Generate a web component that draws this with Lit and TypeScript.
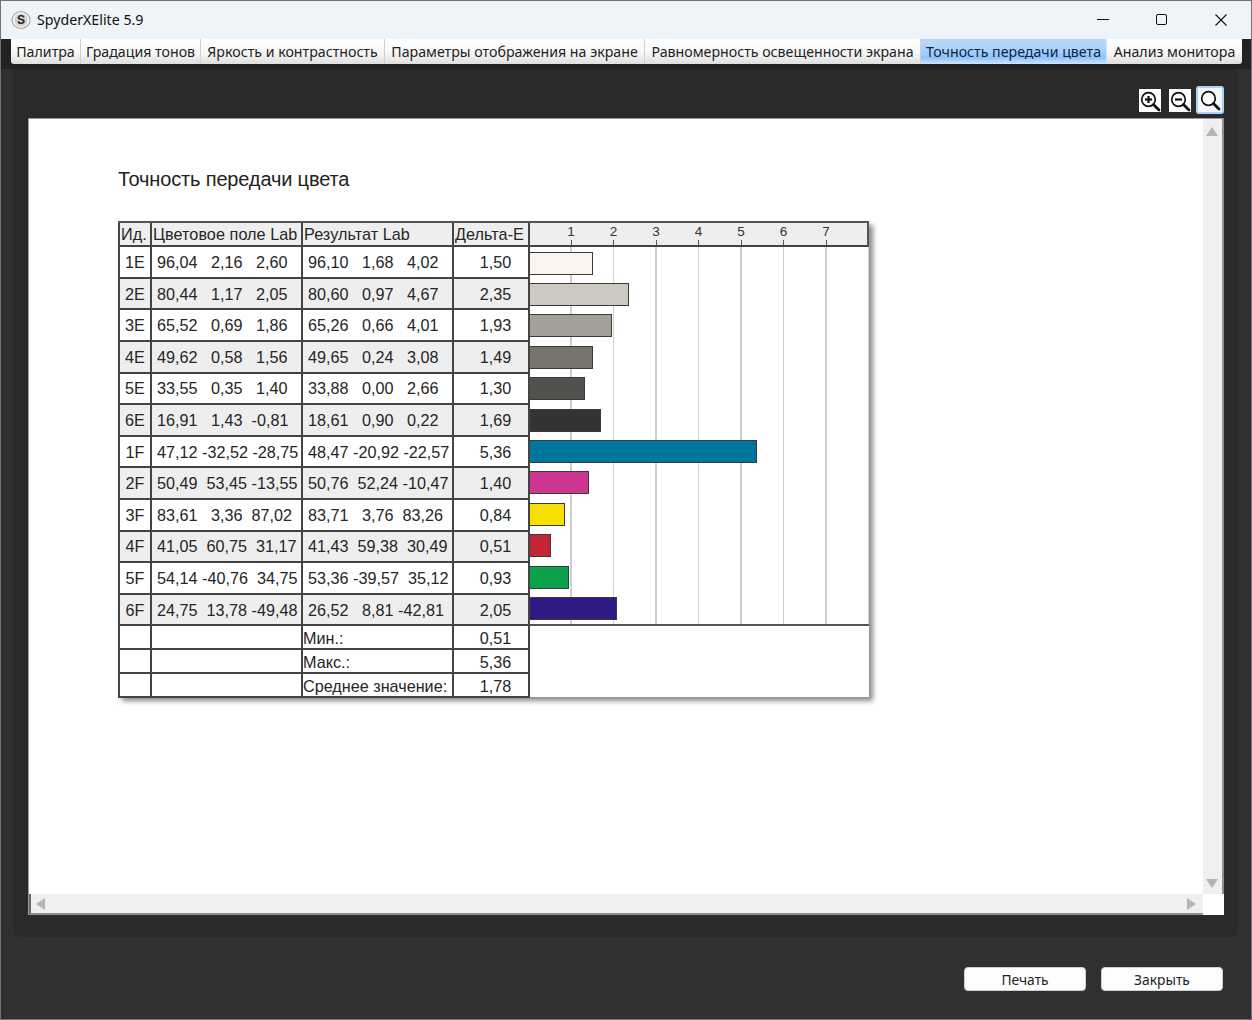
import { LitElement, html, css, svg } from "lit";
import { customElement } from "lit/decorators.js";

const TABS = ["Палитра", "Градация тонов", "Яркость и контрастность", "Параметры отображения на экране", "Равномерность освещенности экрана", "Точность передачи цвета", "Анализ монитора"];

type Row = [string, number[], number[], string, string];
const ROWS: Row[] = [
  ["1E", [96.04, 2.16, 2.6], [96.1, 1.68, 4.02], "1,50", "#fbf4ee"],
  ["2E", [80.44, 1.17, 2.05], [80.6, 0.97, 4.67], "2,35", "#cdc9c2"],
  ["3E", [65.52, 0.69, 1.86], [65.26, 0.66, 4.01], "1,93", "#a3a097"],
  ["4E", [49.62, 0.58, 1.56], [49.65, 0.24, 3.08], "1,49", "#76746d"],
  ["5E", [33.55, 0.35, 1.4], [33.88, 0, 2.66], "1,30", "#52514e"],
  ["6E", [16.91, 1.43, -0.81], [18.61, 0.9, 0.22], "1,69", "#333333"],
  ["1F", [47.12, -32.52, -28.75], [48.47, -20.92, -22.57], "5,36", "#00769c"],
  ["2F", [50.49, 53.45, -13.55], [50.76, 52.24, -10.47], "1,40", "#cc3590"],
  ["3F", [83.61, 3.36, 87.02], [83.71, 3.76, 83.26], "0,84", "#f7e000"],
  ["4F", [41.05, 60.75, 31.17], [41.43, 59.38, 30.49], "0,51", "#c32537"],
  ["5F", [54.14, -40.76, 34.75], [53.36, -39.57, 35.12], "0,93", "#0aa24b"],
  ["6F", [24.75, 13.78, -49.48], [26.52, 8.81, -42.81], "2,05", "#2f1a85"],
];
const STEP = 42.5;

const fmt = (v: number[]) =>
  v.map((n) => n.toFixed(2).replace(".", ",").padStart(6, " ")).join(" ").trimStart();

const mag = (kind: "plus" | "minus" | "none") => svg`
  <svg viewBox="0 0 22 22" width="22" height="22" aria-hidden="true">
    <circle cx="9.5" cy="9.5" r="6.8" fill="#fff" stroke="#111" stroke-width="1.7"></circle>
    <path d="M14.4 14.4 L20 20" stroke="#111" stroke-width="2.8" stroke-linecap="round"></path>
    ${kind !== "none" ? svg`<path d="M6 9.5 H13" stroke="#111" stroke-width="2.2"></path>` : ""}
    ${kind === "plus" ? svg`<path d="M9.5 6 V13" stroke="#111" stroke-width="2.2"></path>` : ""}
  </svg>`;

@customElement("app-root")
export class AppRoot extends LitElement {
  static styles = css`
    :host { display: block; width: 1252px; height: 1020px; overflow: hidden; }
    .win { box-sizing: border-box; width: 1252px; height: 1020px; border: 1px solid #6f7276; background: #303030; display: flex; flex-direction: column; font-family: "Liberation Sans", sans-serif; }
    .title { flex: none; height: 38px; background: #eff4f9; display: flex; align-items: center; padding-left: 10px; color: #111; font: 14.2px "Noto Sans", "Open Sans", sans-serif; }
    .title .name { margin-left: 6px; margin-top: -2px; }
    .logo { width: 20px; height: 20px; }
    .ctrls { margin-left: auto; display: flex; align-items: center; padding-right: 1px; }
    .ctrl { width: 59px; height: 38px; display: flex; align-items: center; justify-content: center; }
    .strip { flex: none; height: 30px; box-sizing: border-box; padding: 0 9px 5px 10px; background: #222; }
    .tabs { height: 25px; display: grid; grid-template-columns: 70px 120px 184px 260px 276px 186px 135px; border-radius: 0 0 3px 3px; }
    .tab { display: flex; align-items: center; justify-content: center; white-space: nowrap; font: 14.2px "Noto Sans", sans-serif; color: #222; background: linear-gradient(#ffffff, #f7f7f7 55%, #dedede); border-right: 1px solid #d0d0d0; box-sizing: border-box; padding-bottom: 1px; }
    .tab:first-child { border-radius: 0 0 0 3px; }
    .tab:last-child { border-right: 0; border-radius: 0 0 3px 0; }
    .tab.active { background: linear-gradient(#b9d9fb, #a6d0fb 50%, #8cc2fb 75%, #cfe5fd); color: #10243c; border-right-color: #cfe5fd; }
    .panel { flex: none; box-sizing: border-box; margin: 0 13px 0 12px; height: 868px; background: #2a2a2a; border-radius: 0 0 8px 8px; padding: 0 14px 0 15px; display: flex; flex-direction: column; }
    .tools { flex: none; height: 49px; display: flex; justify-content: flex-end; align-items: flex-start; gap: 8px; padding-top: 20px; box-sizing: border-box; }
    .tool { width: 22px; height: 23px; background: #fff; display: flex; align-items: center; justify-content: center; box-sizing: border-box; }
    .tool.on { width: 28px; height: 28px; margin: -3px 0 0 -3px; border: 2px solid #a9d3fb; background: #f4f8fc; border-radius: 3px; }
    .view { flex: none; width: 1196px; height: 797px; box-sizing: border-box; background: #fff; border-top: 1px solid #999; border-left: 1px solid #999; display: grid; grid-template-columns: 1fr 21px; grid-template-rows: 1fr 21px; }
    .page { padding: 49px 0 0 90px; overflow: hidden; }
    h1 { margin: 0 0 30px -1px; font: 400 20px "Liberation Sans", sans-serif; color: #222; height: 23px; line-height: 23px; letter-spacing: -0.15px; }
    .vbar { background: #efefef; display: flex; flex-direction: column; justify-content: space-between; align-items: center; padding: 8px 1px 6px 0; box-sizing: border-box; border-right: 2px solid #8f8f8f; }
    .hbar { background: #efefef; display: flex; justify-content: space-between; align-items: center; padding: 0 7px 0 5px; border-bottom: 2px solid #8f8f8f; border-left: 2px solid #6a6a6a; box-sizing: border-box; }
    .tri { width: 0; height: 0; border-style: solid; border-color: transparent; }
    .up { border-width: 0 6px 9px; border-bottom-color: #b4b4b4; }
    .down { border-width: 9px 6px 0; border-top-color: #b4b4b4; }
    .left { border-width: 6px 9px 6px 0; border-right-color: #b4b4b4; }
    .right { border-width: 6px 0 6px 9px; border-left-color: #b4b4b4; }
    .corner { background: #fff; }
    .report { margin-left: -1px; width: 751px; height: 476px; box-shadow: 4px 4px 5px #8c8c8c; display: grid; grid-template-columns: 32px 151px 151px 76px 341px; grid-template-rows: 24.3px repeat(12, 31.6px) repeat(3, 23.9px); background: #fff; border-top: 2px solid #555; box-sizing: border-box; position: relative; font-size: 16.2px; color: #262626; line-height: 1; }
    .c { box-sizing: border-box; border-left: 2px solid #444; border-bottom: 2px solid #444; display: flex; align-items: center; white-space: pre; overflow: hidden; }
    .h { background: #eeeeee; padding-left: 1px; letter-spacing: 0.06px; }
    .id { justify-content: center; }
    .num { padding-left: 5px; }
    .de { justify-content: center; padding-left: 9px; }
    .alt { background: #eeeeee; }
    .foot { padding-top: 2px; }
    .scale { grid-column: 5; grid-row: 1; background: #eeeeee; border-left: 2px solid #444; border-bottom: 2px solid #444; border-right: 2px solid #555; position: relative; box-sizing: border-box; }
    .tick { position: absolute; bottom: 0; width: 1px; height: 5px; background: #555; }
    .tnum { position: absolute; top: 2px; width: 20px; margin-left: -10px; text-align: center; color: #333; font-size: 13.5px; }
    .chart { grid-column: 5; grid-row: 2 / span 12; border-left: 2px solid #444; border-bottom: 2px solid #555; box-sizing: border-box; display: grid; grid-template-rows: repeat(12, 1fr); align-items: center; background-color: #fff; background-image: repeating-linear-gradient(90deg, transparent 0 40.4px, #cfcfcf 40.4px 41.8px, transparent 41.8px 42.5px); }
    .bar { height: 23px; box-sizing: border-box; border: 1.5px solid #3a3a3a; border-left: 0; }
    .blank { grid-column: 5; grid-row: 14 / span 3; border-left: 2px solid #444; }
    .foot-bar { flex: none; display: flex; justify-content: flex-end; gap: 15px; padding: 30px 28px 0 0; }
    .btn { box-sizing: border-box; height: 24px; width: 122px; background: #fdfdfd; border: 1px solid #cfcfcf; border-radius: 4px; display: flex; align-items: center; justify-content: center; font: 13.8px "Noto Sans", sans-serif; color: #222; }
  `;

  render() {
    return html`<div class="win">
      <div class="title">
        <svg class="logo" viewBox="0 0 20 20" aria-hidden="true">
          <path d="M10 1.5 Q13 1.5 15.5 3.4 Q19 6 19 10 Q19 14 15.5 16.6 Q13 18.5 10 18.5 Q7 18.5 4.5 16.6 Q1 14 1 10 Q1 6 4.5 3.4 Q7 1.5 10 1.5 Z" fill="#f7f7f7" stroke="#a8a8a8" stroke-width="1.2"></path>
          <circle cx="10" cy="10" r="6.6" fill="#d3d3d3"></circle>
          <text x="10" y="14" font-size="12" font-weight="700" text-anchor="middle" font-family="Liberation Sans" fill="#222">S</text>
        </svg>
        <span class="name">SpyderXElite 5.9</span>
        <div class="ctrls">
          <div class="ctrl"><svg width="14" height="14" viewBox="0 0 14 14"><path d="M1 6.5 H13" stroke="#111"></path></svg></div>
          <div class="ctrl"><svg width="14" height="14" viewBox="0 0 14 14"><rect x="1.5" y="1.5" width="10" height="10" rx="1.5" fill="none" stroke="#111"></rect></svg></div>
          <div class="ctrl"><svg width="14" height="14" viewBox="0 0 14 14"><path d="M1.5 1.5 L12.5 12.5 M12.5 1.5 L1.5 12.5" stroke="#111" stroke-width="1.1"></path></svg></div>
        </div>
      </div>
      <div class="strip">
        <div class="tabs">
          ${TABS.map((t, i) => html`<div class="tab ${i === 5 ? "active" : ""}">${t}</div>`)}
        </div>
      </div>
      <div class="panel">
        <div class="tools">
          <div class="tool">${mag("plus")}</div>
          <div class="tool">${mag("minus")}</div>
          <div class="tool on">${mag("none")}</div>
        </div>
        <div class="view">
          <div class="page">
            <h1>Точность передачи цвета</h1>
            <div class="report">
              <div class="c h">Ид.</div>
              <div class="c h">Цветовое поле Lab</div>
              <div class="c h">Результат Lab</div>
              <div class="c h">Дельта-Е</div>
              <div class="scale">
                ${[1, 2, 3, 4, 5, 6, 7].map((n) => html`
                  <span class="tnum" style="left:${n * STEP - 1.5}px">${n}</span>
                  <span class="tick" style="left:${n * STEP - 2}px"></span>`)}
              </div>
              ${ROWS.map((r, i) => {
                const alt = i % 2 ? "alt" : "";
                return html`
                  <div class="c id ${alt}" style="grid-row:${i + 2}">${r[0]}</div>
                  <div class="c num ${alt}" style="grid-row:${i + 2}">${fmt(r[1])}</div>
                  <div class="c num ${alt}" style="grid-row:${i + 2}">${fmt(r[2])}</div>
                  <div class="c de ${alt}" style="grid-row:${i + 2}">${r[3]}</div>`;
              })}
              <div class="chart">
                ${ROWS.map((r) => html`<div class="bar" style="width:${parseFloat(r[3].replace(",", ".")) * STEP - 0.5}px;background:${r[4]}"></div>`)}
              </div>
              ${["Мин.:", "Макс.:", "Среднее значение:"].map((l, i) => html`
                <div class="c" style="grid-row:${14 + i};grid-column:1"></div>
                <div class="c" style="grid-row:${14 + i};grid-column:2"></div>
                <div class="c foot" style="grid-row:${14 + i};grid-column:3">${l}</div>
                <div class="c de foot" style="grid-row:${14 + i};grid-column:4">${["0,51", "5,36", "1,78"][i]}</div>`)}
              <div class="blank"></div>
            </div>
          </div>
          <div class="vbar"><span class="tri up"></span><span class="tri down"></span></div>
          <div class="hbar"><span class="tri left"></span><span class="tri right"></span></div>
          <div class="corner"></div>
        </div>
      </div>
      <div class="foot-bar">
        <div class="btn">Печать</div>
        <div class="btn">Закрыть</div>
      </div>
    </div>`;
  }
}
